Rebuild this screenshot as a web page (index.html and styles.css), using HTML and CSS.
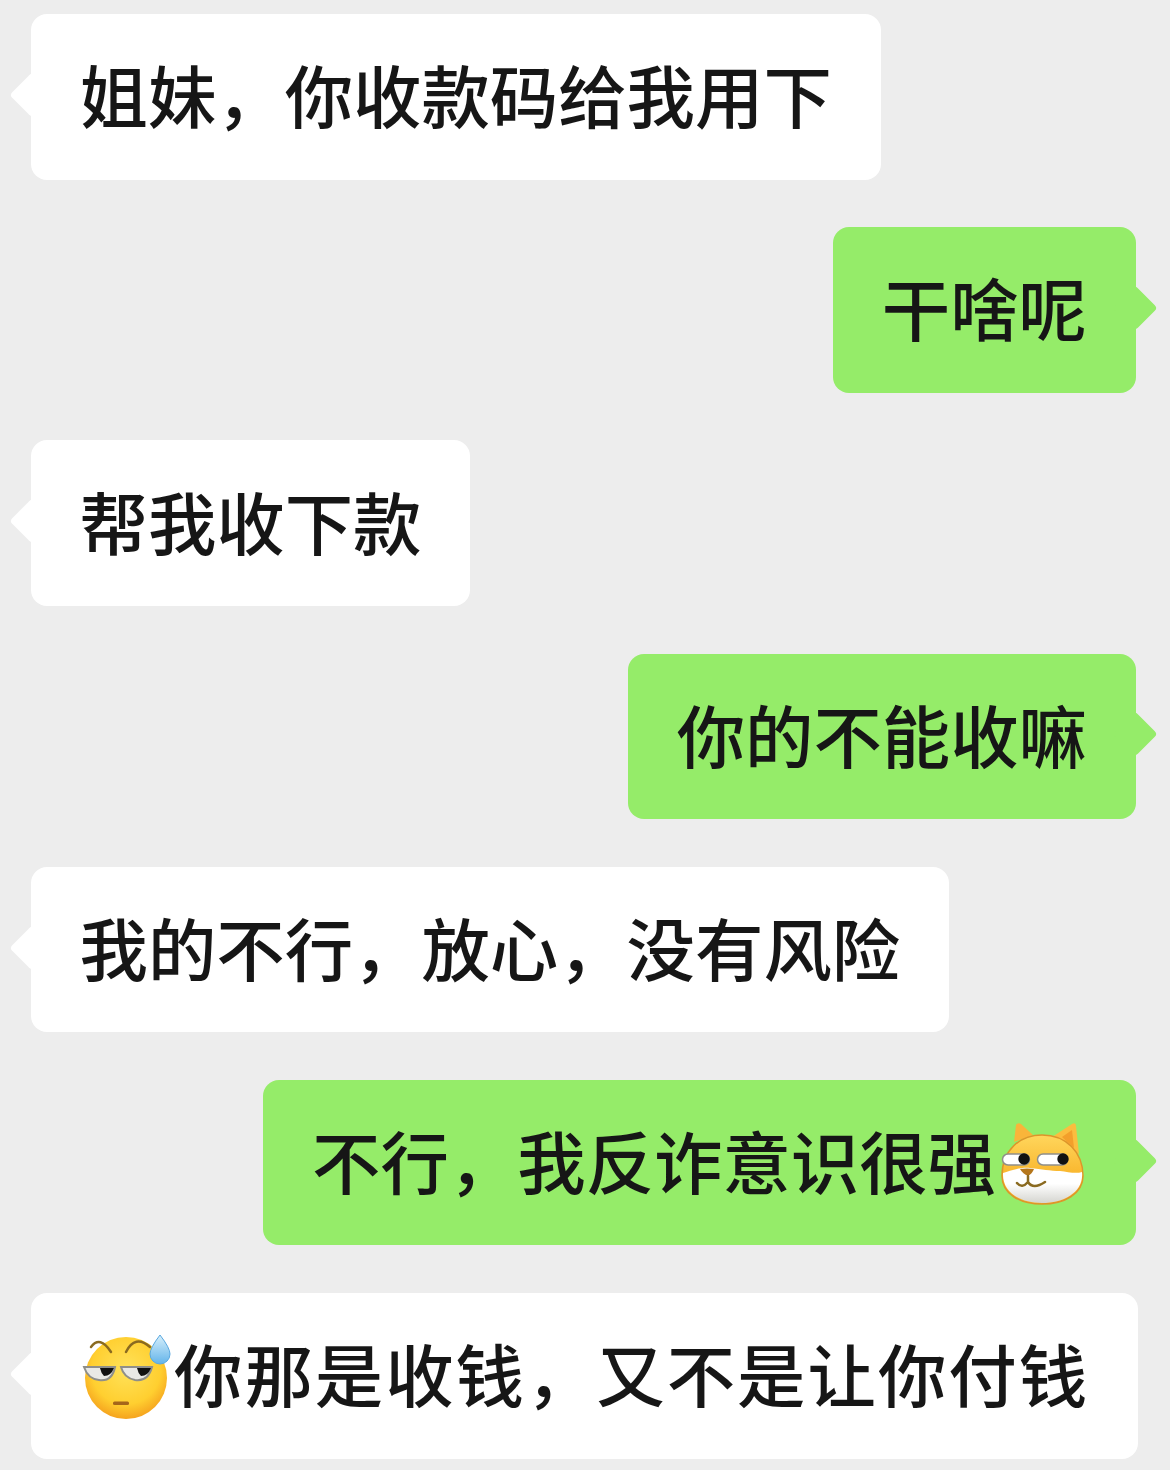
FILE: index.html
```html
<!DOCTYPE html>
<html lang="zh-CN">
<head>
    <meta charset="UTF-8">
    <meta name="viewport" content="width=device-width, initial-scale=1.0">
    <title>聊天记录</title>
    <link rel="stylesheet" href="styles.css">
</head>
<body>

    <div class="chat">
        <div class="bubble left">姐妹，你收款码给我用下</div>
        <div class="bubble right">干啥呢</div>
        <div class="bubble left">帮我收下款</div>
        <div class="bubble right">你的不能收嘛</div>
        <div class="bubble left">我的不行，放心，没有风险</div>
        <div class="bubble right">
            不行，我反诈意识很强
            <!-- 狗头表情 -->
            <svg class="emoji dog" viewBox="0 0 84 84">
                <defs>
                    <linearGradient id="dogFur" x1="0" y1="0" x2="0" y2="1">
                        <stop offset="0" stop-color="#ffd65c"/>
                        <stop offset="0.6" stop-color="#f9b52c"/>
                    </linearGradient>
                    <linearGradient id="dogChin" x1="0" y1="0" x2="0" y2="1">
                        <stop offset="0.45" stop-color="#ffffff"/>
                        <stop offset="1" stop-color="#d5d5d0"/>
                    </linearGradient>
                </defs>
                <path d="M14 20 L16 3 Q18 0 21 2 L33 13 Z" fill="#f9b53a"/>
                <path d="M52 15 L72 2 Q76 0 76 4 L79 32 Z" fill="#fbbd3f"/>
                <path d="M62 15 L72 8 L74 26 Z" fill="#f39f2b"/>
                <path d="M2 54 C2 28 20 13 42 13 C66 13 83 30 83 54 C83 72 64 82 42 82 C20 82 2 72 2 54 Z" fill="url(#dogFur)" stroke="#dd952a" stroke-width="1.500"/>
                <path d="M3 51 C10 49 20 45 30 46 C42 47 50 49 60 49 C68 50 76 52 82 50 C84 70 64 81 42 81 C20 81 2 70 3 51 Z" fill="url(#dogChin)"/>
                <rect x="2.500" y="32" width="27" height="11" rx="5.500" fill="#fff" stroke="#8f8f8a" stroke-width="1.500"/>
                <rect x="37.500" y="32" width="30" height="11" rx="5.500" fill="#fff" stroke="#8f8f8a" stroke-width="1.500"/>
                <circle cx="24" cy="37" r="5.700" fill="#111"/>
                <circle cx="63" cy="37" r="5.700" fill="#111"/>
                <path d="M20 47 Q27 46 34 47 Q32 52 28 54 Q23 52 20 47 Z" fill="#b5761b"/>
                <path d="M28 54 L28 60 M17 61 Q22 67 28 60 Q33 68 45 60" fill="none" stroke="#8a6a20" stroke-width="2.500" stroke-linecap="round"/>
            </svg>
        </div>
        <div class="bubble left wide">
            <!-- 流汗表情 -->
            <svg class="emoji sweat" viewBox="0 0 90 90">
                <defs>
                    <radialGradient id="faceFill" cx="0.5" cy="0.4" r="0.6">
                        <stop offset="0" stop-color="#ffe25a"/>
                        <stop offset="0.7" stop-color="#ffcf30"/>
                        <stop offset="1" stop-color="#f5a31e"/>
                    </radialGradient>
                    <linearGradient id="dropFill" x1="0" y1="0" x2="0" y2="1">
                        <stop offset="0" stop-color="#d8f0fb"/>
                        <stop offset="1" stop-color="#63b4ea"/>
                    </linearGradient>
                </defs>
                <circle cx="44" cy="46" r="41" fill="url(#faceFill)"/>
                <path d="M9 15 Q18 3 29 20" fill="none" stroke="#8a6a20" stroke-width="2.500" stroke-linecap="round"/>
                <path d="M44 20 Q53 2 68 15" fill="none" stroke="#8a6a20" stroke-width="2.500" stroke-linecap="round"/>
                <path d="M2 35 L33 35 Q30 50 17 48 Q6 47 2 35 Z" fill="#e9e9e6" stroke="#8f8f8a" stroke-width="2"/>
                <path d="M39 35 L70 35 Q66 50 53 48 Q42 46 39 35 Z" fill="#e9e9e6" stroke="#8f8f8a" stroke-width="2"/>
                <path d="M18 36 L32 36 Q29 44 22 44 Q19 41 18 36 Z" fill="#111"/>
                <path d="M55 36 L69 36 Q66 44 59 44 Q56 41 55 36 Z" fill="#111"/>
                <rect x="31" y="69.500" width="16" height="3.500" rx="1.500" fill="#a5651a"/>
                <path d="M78 3 Q88 16 88 22 A10 10 0 0 1 68 22 Q68 16 78 3 Z" fill="url(#dropFill)" stroke="#5aa8e0" stroke-width="1"/>
            </svg>
            你那是收钱，又不是让你付钱
        </div>
    </div>

</body>
</html>
```

FILE: styles.css
```css
body {
    margin: 0;
    background-color: #ededed;
    font-family: "Noto Sans CJK SC", "Noto Sans", sans-serif;
}

.chat {
    display: flex;
    flex-direction: column;
    gap: 47.7px;
    padding: 14px 34px 12px 30.5px;
}

/* 气泡 */
.bubble {
    position: relative;
    display: flex;
    align-items: center;
    box-sizing: border-box;
    height: 165.5px;
    padding: 0 49px 6px;
    border-radius: 16px;
    font-size: 68.4px;
    font-weight: 500;
    color: #161616;
    white-space: nowrap;
}

.bubble::before {
    content: "";
    position: absolute;
    top: 50%;
    width: 32px;
    height: 32px;
    margin-top: -18px;
    background-color: inherit;
    border-radius: 4px;
    transform: rotate(45deg);
}

.left {
    align-self: flex-start;
    background-color: #fff;
}

.left::before {
    left: -15px;
}

.right {
    align-self: flex-end;
    background-color: #95ec69;
}

.right::before {
    right: -15px;
}

.wide {
    letter-spacing: 2px;
    margin-right: -2px;
}

/* 表情 */
.emoji {
    flex: none;
    margin-top: 9px;
}

.dog {
    width: 84px;
    height: 84px;
    margin-left: 4px;
    margin-right: 3px;
}

.sweat {
    width: 90px;
    height: 90px;
    margin-left: 2px;
    margin-right: 2.5px;
}
```
